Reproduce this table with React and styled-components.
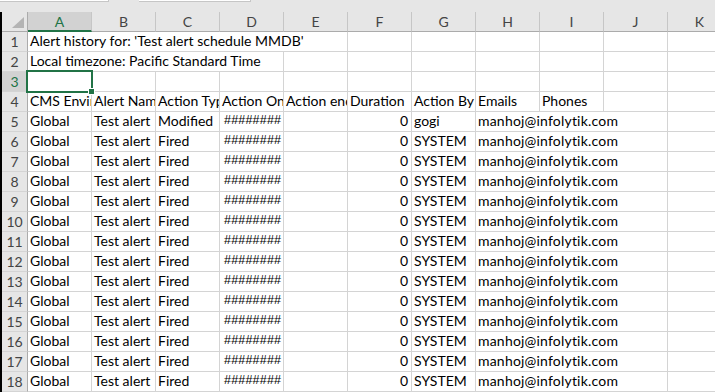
import styled, {createGlobalStyle} from "styled-components";

const GlobalStyle = createGlobalStyle`
  html, body {
    margin: 0;
    padding: 0;
    background: #e6e6e6;
    overflow: hidden;
  }
`

const GREEN = "#217346"
const COLUMNS = ["A", "B", "C", "D", "E", "F", "G", "H", "I", "J", "K"]
const SELECTED_COL = 0
const SELECTED_ROW = 3

const Window = styled.div`
  width: 715px;
  height: 392px;
  overflow: hidden;
  background: #e6e6e6;
  font-family: Lato, "Open Sans", sans-serif;
  font-size: 14px;
  color: #000;
`

const FormulaBar = styled.div`
  height: 12px;
  display: flex;
  align-items: flex-start;
`

const NameBox = styled.div`
  box-sizing: border-box;
  width: ${p => p.$width}px;
  height: 2px;
  margin-left: ${p => p.$offset || 0}px;
  background: #fff;
  border-right: 1px solid #c6c6c6;
  border-bottom: 1px solid #c6c6c6;
`

const SheetArea = styled.div`
  display: flex;
`

const EdgeBar = styled.div`
  width: 2px;
  height: 380px;
  background: #000;
  flex: none;
`

const Grid = styled.div`
  position: relative;
  display: grid;
  grid-template-columns: 26px repeat(${COLUMNS.length}, 64px);
  grid-auto-rows: 20px;
  background: #fff;
`

const Corner = styled.div`
  box-sizing: border-box;
  background: #e6e6e6;
  border-right: 1px solid #ababab;
  border-bottom: 1px solid #ababab;
  display: flex;
  align-items: flex-end;
  justify-content: flex-end;
  padding: 0 3px 3px 0;
`

const ColHead = styled.div`
  box-sizing: border-box;
  display: flex;
  align-items: center;
  justify-content: center;
  background: ${p => p.$selected ? "#d2d2d2" : "#e6e6e6"};
  color: ${p => p.$selected ? GREEN : "#444"};
  border-right: 1px solid #c6c6c6;
  border-bottom: ${p => p.$selected ? `2px solid ${GREEN}` : "1px solid #ababab"};
  padding-top: ${p => p.$selected ? 1 : 0}px;
`

const RowHead = styled.div`
  box-sizing: border-box;
  display: flex;
  align-items: center;
  justify-content: center;
  background: ${p => p.$selected ? "#d2d2d2" : "#e6e6e6"};
  color: ${p => p.$selected ? GREEN : "#444"};
  border-right: 1px solid #ababab;
  border-bottom: 1px solid #d4d4d4;
`

const Cell = styled.div`
  box-sizing: border-box;
  grid-column: span ${p => p.$span || 1};
  display: flex;
  align-items: flex-end;
  justify-content: ${p => p.$right ? "flex-end" : "flex-start"};
  padding: 0 ${p => p.$right ? 3 : 1}px 1px 2px;
  border-right: 1px solid #d4d4d4;
  border-bottom: 1px solid #d4d4d4;
  white-space: nowrap;
  overflow: hidden;
  line-height: 18px;
  letter-spacing: ${p => p.$spread || 0}px;
`

// dates too wide for the column are shown as a run of hashes
const Hashes = styled.span`
  font-family: "Liberation Sans", Arial, sans-serif;
  font-size: 12.5px;
  letter-spacing: 0.2px;
  padding: 0 0 1px 2px;
`

const Selection = styled.div`
  position: absolute;
  box-sizing: border-box;
  left: 24px;
  top: 58px;
  width: 67px;
  height: 23px;
  border: 2px solid ${GREEN};
  pointer-events: none;
`

const FillHandle = styled.div`
  position: absolute;
  right: -4px;
  bottom: -4px;
  width: 5px;
  height: 5px;
  background: ${GREEN};
  border: 1px solid #fff;
`

const CornerMark = () => (
  <svg width="12" height="11" viewBox="0 0 12 11">
    <polygon points="12,0 12,11 0,11" fill="#b4b4b4"/>
  </svg>
)

const head = ["CMS Environment", "Alert Name", "Action Type", "Action On", "Action end", "Duration", "Action By"]

const dataRow = (type, by) => ([
  {text: "Global"},
  {text: "Test alert"},
  {text: type},
  {hashes: true},
  {},
  {text: "0", right: true},
  {text: by},
  {text: "manhoj@infolytik.com", span: 3, spread: 0.2},
  {}
])

const blanks = n => Array.from({length: n}, () => ({}))

const rows = [
  [{text: "Alert history for: 'Test alert schedule MMDB'", span: 5}, ...blanks(6)],
  [{text: "Local timezone: Pacific Standard Time", span: 4}, ...blanks(7)],
  blanks(11),
  [...head.map(text => ({text})), {text: "Emails"}, {text: "Phones"}, ...blanks(2)],
  dataRow("Modified", "gogi"),
  ...Array.from({length: 13}, () => dataRow("Fired", "SYSTEM"))
]

export default function App() {
  return (
    <Window>
      <GlobalStyle/>
      <FormulaBar>
        <NameBox $width={109}/>
        <NameBox $width={112} $offset={30}/>
      </FormulaBar>

      <SheetArea>
        <EdgeBar/>
        <Grid>
          <Corner><CornerMark/></Corner>
          {COLUMNS.map((col, i) => (
            <ColHead key={col} $selected={i === SELECTED_COL}>{col}</ColHead>
          ))}

          {rows.map((cells, r) => [
            <RowHead key={`h${r}`} $selected={r + 1 === SELECTED_ROW}>{r + 1}</RowHead>,
            ...cells.map((cell, c) => (
              <Cell key={`${r}-${c}`} $span={cell.span} $right={cell.right} $spread={cell.spread}>
                {cell.hashes ? <Hashes>########</Hashes> : cell.text}
              </Cell>
            ))
          ])}

          <Selection>
            <FillHandle/>
          </Selection>
        </Grid>
      </SheetArea>
    </Window>
  )
}
